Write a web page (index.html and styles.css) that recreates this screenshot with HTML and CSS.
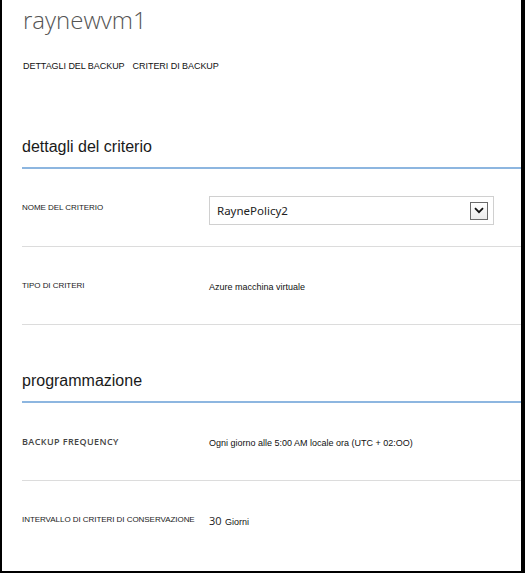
FILE: index.html
```html
<!DOCTYPE html>
<html lang="it">
<head>
<meta charset="utf-8">
<title>raynewvm1</title>
<link rel="stylesheet" href="styles.css">
</head>
<body>
<div class="frame">
  <header class="top">
    <h1 class="title">raynewvm1</h1>
    <nav class="tabs">
      <span class="tab">DETTAGLI DEL BACKUP</span>
      <span class="tab">CRITERI DI BACKUP</span>
    </nav>
  </header>

  <section class="section">
    <h2 class="heading first">dettagli del criterio</h2>
    <div class="row">
      <div class="label">NOME DEL CRITERIO</div>
      <div class="select">
        <span class="select-text">RaynePolicy2</span>
        <span class="select-btn">
          <svg width="10" height="7" viewBox="0 0 10 7"><path d="M1 1.2 L5 5.2 L9 1.2" fill="none" stroke="#111" stroke-width="1.8"/></svg>
        </span>
      </div>
    </div>
    <div class="row">
      <div class="label">TIPO DI CRITERI</div>
      <div class="value">Azure macchina virtuale</div>
    </div>
  </section>

  <section class="section">
    <h2 class="heading second">programmazione</h2>
    <div class="row">
      <div class="label strong">BACKUP FREQUENCY</div>
      <div class="value">Ogni giorno alle 5:00 AM locale ora (UTC + 02:OO)</div>
    </div>
    <div class="row last">
      <div class="label">INTERVALLO DI CRITERI DI CONSERVAZIONE</div>
      <div class="value"><span class="num">30</span> Giorni</div>
    </div>
  </section>
</div>
</body>
</html>
```
FILE: styles.css
```css
html, body {
  margin: 0;
  padding: 0;
  background: #fff;
}
.frame {
  box-sizing: border-box;
  width: 525px;
  height: 573px;
  border-left: 2px solid #000;
  border-right: 4px solid #000;
  border-bottom: 2px solid #000;
  padding-left: 20px;
  background: #fff;
  overflow: hidden;
  font-family: "Liberation Sans", Arial, sans-serif;
  color: #1a1a1a;
}
.top {
  padding-left: 1px;
}
.title {
  margin: 0;
  padding-top: 4px;
  font-family: "Open Sans", "Noto Sans", sans-serif;
  font-weight: 300;
  font-size: 24px;
  line-height: 32px;
  color: #555;
  letter-spacing: 0;
}
.tabs {
  display: flex;
  gap: 8px;
  margin-top: 24px;
  font-size: 9px;
  line-height: 12px;
  letter-spacing: -0.05px;
  color: #111;
}
.heading {
  margin: 0;
  font-weight: 400;
  font-size: 16px;
  line-height: 18px;
  color: #1a1a1a;
  border-bottom: 2px solid #8db6e0;
  padding-bottom: 11px;
}
.heading.first {
  padding-top: 66px;
}
.heading.second {
  padding-top: 47px;
}
.row {
  display: flex;
  align-items: flex-start;
  box-sizing: border-box;
  height: 78px;
  padding-top: 34px;
  border-bottom: 1px solid #dcdcdc;
}
.row.last {
  border-bottom: none;
}
.label {
  width: 187px;
  flex: none;
  font-size: 8px;
  line-height: 10px;
  letter-spacing: -0.05px;
  color: #1a1a1a;
}
.label.strong {
  font-family: "Open Sans", "Noto Sans", sans-serif;
  font-weight: 600;
  font-size: 9px;
  letter-spacing: 0.4px;
  color: #444;
}
.value {
  font-size: 9px;
  line-height: 12px;
  letter-spacing: 0;
  color: #111;
}
.num {
  font-family: "Open Sans", "Noto Sans", sans-serif;
  font-size: 11px;
  letter-spacing: 0;
  color: #222;
  margin-right: 1px;
}
.select {
  box-sizing: border-box;
  width: 285px;
  height: 29px;
  margin-top: -7px;
  border: 1px solid #d0d0d0;
  display: flex;
  align-items: center;
  justify-content: space-between;
  padding: 0 5px 0 7px;
}
.select-text {
  font-family: "Noto Sans", "Open Sans", sans-serif;
  font-size: 11.5px;
  color: #222;
}
.select-btn {
  box-sizing: border-box;
  width: 18px;
  height: 18px;
  border: 1px solid #6a6a6a;
  background: linear-gradient(#ffffff, #ececec);
  display: flex;
  align-items: center;
  justify-content: center;
}
```
